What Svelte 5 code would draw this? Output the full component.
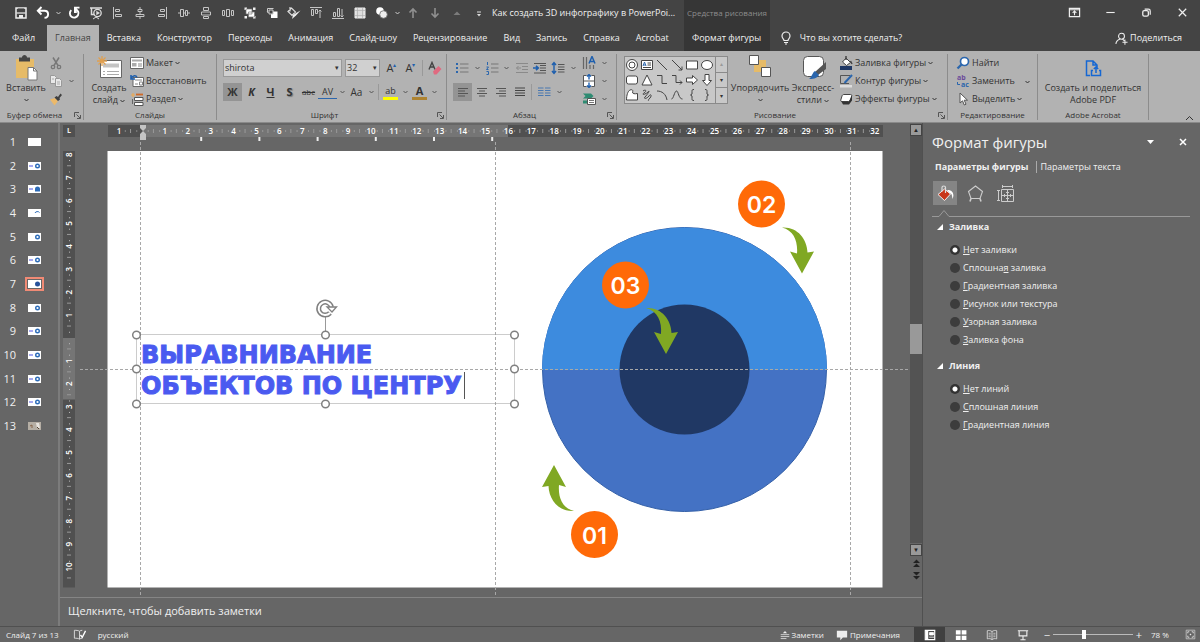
<script lang="ts">
  // every icon is drawn on a 14x14 grid unless a size is given
  const icons: Record<string, string> = {
    save: `<path d="M2 2h10v10H2z" fill="none" stroke="#eee" stroke-width="1.500"/><path d="M4 2.500h6v3.500H4z" fill="#444"/><path d="M2.500 7h9" stroke="#eee" stroke-width="1.200"/><path d="M5 9h4v3H5z" fill="#eee"/>`,
    undo: `<path d="M5.500 1 1.800 4.800l3.700 3.700M2.500 4.800H8.500c4.800 0 4.800 7 0 7" fill="none" stroke="#fff" stroke-width="1.900"/>`,
    redo: `<path d="M8.500 3.200A4.300 4.300 0 1 1 4.300 4.100" fill="none" stroke="#fff" stroke-width="1.900"/><path d="M7 .8h5.500v1.700H9.800V7H7z" fill="#fff"/>`,
    show: `<path d="M1 2h12M2.500 2.500v6h3" fill="none" stroke="#ddd" stroke-width="1.500"/><circle cx="8.500" cy="7" r="3.700" fill="none" stroke="#ddd" stroke-width="1.300"/><path d="M7.300 4.800v4.400L11 7z" fill="#ddd"/><path d="M4 13l3-2 3 2" fill="none" stroke="#ddd"/>`,
    alignLeft: `<path d="M2.500 1v12M4.500 3.500h4v2h-4zM4.500 8.500h6v2h-6z" fill="none" stroke="#c4c4c4"/>`,
    alignCenter: `<path d="M7 1v2M5 3.500h4v2H5zM7 6v2.500M3 8.500h8v2H3zM7 11v2" fill="none" stroke="#c4c4c4"/>`,
    alignRight: `<path d="M11.500 1v12M5.500 3.500h4v2h-4zM3.500 8.500h6v2h-6z" fill="none" stroke="#c4c4c4"/>`,
    middle: `<path d="M1 7h2M3.500 3.500h3v7h-3zM8.500 4.500h2v5h-2zM11 7h2M6.500 7h2" fill="none" stroke="#c4c4c4"/>`,
    distV: `<path d="M4.500 1.500h5v3h-5zM2.500 6h9v3h-9zM4.500 10.500h5v2h-5z" fill="none" stroke="#c4c4c4"/>`,
    distH: `<path d="M1.500 4.500h2v5h-2zM5.500 3.500h3v7h-3zM10.500 4.500h2v5h-2z" fill="none" stroke="#c4c4c4"/>`,
    group: `<path d="M1.500 1.500H4V4H1.500zM10 1.500h2.500V4H10zM1.500 10H4v2.500H1.500zM10 10h2.500v2.500H10z" fill="#eee"/><path d="M3 3h6v5H3zM5.500 6h6v5h-6z" fill="#fff" stroke="#777" stroke-width=".7"/>`,
    ungroup: `<path d="M2.500 2.500h6M2.500 2.500v4M2 5l1.500 2" fill="none" stroke="#ccc"/><path d="M6 5.500h6.500V12H6z" fill="#fff"/><path d="M4 4h4v4H4z" fill="#444" stroke="#ccc"/>`,
    fillTool: `<path d="M3 1v4.500M1 5.500 4.500 2l4 4-3.500 3.500z" fill="none" stroke="#ddd" stroke-width="1.200"/><path d="M13.500 4.500l-4.500 5-4 3.500 1-4 4-2.500z" fill="#eee"/>`,
    topAlign: `<path d="M1 1.500h12M2.500 3.500h2v6h-2zM6.500 3.500h2v4h-2zM11 12V4M9.500 5.500 11 4l1.500 1.500" fill="none" stroke="#c4c4c4"/>`,
    bottomAlign: `<path d="M1 12.500h12M2.500 6.500h2v4h-2zM6.500 2.500h2v8h-2zM11 3v8M9.500 9.500 11 11l1.500-1.500" fill="none" stroke="#c4c4c4"/>`,
    table: `<path d="M2 2h10v10H2z" fill="#ddd" stroke="#eee"/><path d="M4.500 2v10M2 4.500h10M2 9.500h10M9.500 2v10" stroke="#aaa" stroke-width=".6"/>`,
    shapes: `<circle cx="5" cy="5" r="3.800" fill="#fff"/><circle cx="8.500" cy="8.500" r="3.800" fill="#eee" stroke="#666" stroke-width=".8"/>`,
    up: `<path d="M7 12V3M3.500 6.500 7 3l3.500 3.500" fill="none" stroke="#909090" stroke-width="1.600"/>`,
    down: `<path d="M7 2v9M3.500 7.500 7 11l3.500-3.500" fill="none" stroke="#909090" stroke-width="1.600"/>`,
    eject: `<path d="M3.500 9 7 5.500 10.500 9z" fill="#7c7c7c"/>`,
    customize: `<path d="M5 6h4" stroke="#ddd"/><path d="M5 8h4L7 10.500z" fill="#ddd"/>`,
    ribbonOpts: `<path d="M1.500 2.500h11v9h-11z" fill="none" stroke="#eee" stroke-width="1.300"/><path d="M1.500 4h11M7 10V6M5 7.500 7 5.500l2 2" fill="none" stroke="#eee" stroke-width="1.200"/>`,
    minimize: `<path d="M2.500 7h9" stroke="#eee" stroke-width="1.200"/>`,
    restore: `<rect x="3" y="5" width="6" height="6" rx="1.500" fill="none" stroke="#eee" stroke-width="1.400"/><path d="M5 3.300h4a2 2 0 0 1 2 2v4" fill="none" stroke="#eee" stroke-width="1.300"/>`,
    close: `<path d="M3 3l8 8M11 3l-8 8" stroke="#eee" stroke-width="1.300"/>`,
    bulb: `<path d="M5 9.500C5 8 3 7.500 3 5a4 4 0 0 1 8 0c0 2.500-2 3-2 4.500zM5 11.500h4M6 13h2" fill="none" stroke="#eee" stroke-width="1.200"/>`,
    person: `<circle cx="7" cy="4.500" r="3.200" fill="none" stroke="#eee" stroke-width="1.100"/><path d="M1 13c0-3 2-4.500 4.500-5.500M8 7.500l2 2M8 11h5.500M10.700 8.200v5.500" fill="none" stroke="#eee" stroke-width="1.100"/>`,
    cut: `<path d="M4 1.500l5 8M10 1.500l-5 8" stroke="#777" stroke-width="1.500"/><circle cx="4" cy="11" r="1.700" fill="none" stroke="#777" stroke-width="1.300"/><circle cx="10" cy="11" r="1.700" fill="none" stroke="#777" stroke-width="1.300"/>`,
    copy: `<path d="M1.500 1.500h4l2 2v6h-6z" fill="#e8e8e8" stroke="#999"/><path d="M6.500 4.500h4l2 2v6h-6z" fill="#e8e8e8" stroke="#999"/><path d="M8 8h3M8 10h3M3 5h2" stroke="#aaa"/>`,
    painter: `<path d="M1 7.500 6 6l3 3-3.500 4.500z" fill="#ecb96a"/><path d="M5.500 5.500 7.500 4l1.500 1 2.500-3.500L13 3l-2.500 3 .5 1.500-2 1.500z" fill="#404040"/>`,
    layout: `<path d="M.5 1.500h13v11H.5z" fill="#fff" stroke="#666"/><path d="M2 3.500h10v2H2zM2 7h4.500v3.500H2z" fill="#aaa"/><path d="M8 8h4M8 10h4" stroke="#888"/>`,
    reset: `<path d="M3 3.500h10.500v9H3z" fill="#fff" stroke="#666"/><path d="M5 6h7M5 10h3M9.500 8h3v3h-3z" fill="none" stroke="#888"/><path d="M1 1v4h4M1 4.500C3 1 6 1 7 3.500" fill="none" stroke="#1e5fae" stroke-width="1.600"/>`,
    section: `<path d="M1 3h4M3 1v4" stroke="#ecaa55" stroke-width="1.200"/><path d="M6 2.500h7" stroke="#d06a28" stroke-width="1.800"/><path d="M4.500 5.500h8.500v3H4.500zM4.500 10.500h8.500v3H4.500z" fill="#fff" stroke="#555"/><path d="M2.500 7v5" stroke="#666"/>`,
    eraser: `<path d="M1 8.500 4 1.500l3 7M2 6h4" fill="none" stroke="#444" stroke-width="1.400"/><path d="M5 10.500 10.500 5l3 3-5 5.500H6z" fill="#e06a80"/>`,
    bullets: `<path d="M1 3h2M1 7h2M1 11h2" stroke="#2b66ad" stroke-width="2"/><path d="M5 3h8.500M5 7h8.500M5 11h8.500" stroke="#777"/>`,
    numbers: `<path d="M2.500 1v3M1.500 6h2L1.500 8.500h2M1.500 10.500h2v3h-2" fill="none" stroke="#2b66ad"/><path d="M6 3h7.500M6 7h7.500M6 11h7.500" stroke="#777"/>`,
    outdent: `<path d="M1 2.500h12M7 5.500h6M7 8.500h6M1 11.500h12" stroke="#8a8a8a"/><path d="M6 7H1.500M3.500 5l-2 2 2 2" fill="none" stroke="#8a8a8a"/>`,
    indent: `<path d="M1 2.500h12M7 4.500h6M7 7h6M7 9.500h6M1 12h12" stroke="#555"/><path d="M0 7h5M3 4.800 5.300 7 3 9.200" fill="none" stroke="#1e5fae" stroke-width="1.600"/>`,
    spacing: `<path d="M3 1.500v11M1 4l2-2.500L5 4M1 10l2 2.500L5 10" fill="none" stroke="#1e5fae" stroke-width="1.400"/><path d="M7 3.500h6.500M7 6h6.500M7 8.500h6.500M7 11h6.500" stroke="#555"/>`,
    left: `<path d="M2 3.500h10M2 6h7M2 8.500h10M2 11h7" stroke="#555"/>`,
    center: `<path d="M2 3.500h10M4 6h6M2 8.500h10M4 11h6" stroke="#555"/>`,
    right: `<path d="M2 3.500h10M5 6h7M2 8.500h10M5 11h7" stroke="#555"/>`,
    justify: `<path d="M2 3h10M2 5.500h10M2 8h10M2 10.500h10" stroke="#444"/>`,
    columns: `<path d="M1 3h5.500M1 5.500h5.500M1 8h5.500M1 10.500h5.500M8 3h5.500M8 5.500h5.500M8 8h5.500M8 10.500h5.500" stroke="#4a78b0"/>`,
    direction: `<path d="M1.500 1v12M4.500 1v12M8 9v4M11.500 9v4" stroke="#666" stroke-width="1.200"/><path d="M7 7.500l3-7 3 7M8 5.500h4" fill="none" stroke="#1e5fae" stroke-width="1.500"/>`,
    valign: `<path d="M4.500 1.500h-3v11h3M9.500 1.500h3v11h-3" fill="#fff" stroke="#555"/><path d="M2 2h10v10H2z" fill="#fff"/><path d="M1.500 7h11" stroke="#555"/><path d="M7 0v5.500M5 2.500l2-2 2 2M7 14V8.500M5 11.500l2 2 2-2" fill="none" stroke="#1e5fae" stroke-width="1.400"/>`,
    smartart: `<path d="M1 1.500h8l2.500 2.500L9 6.500H1L3.500 4zM1 8.500h5v3H1z" fill="#2e8b72"/><path d="M5.500 6.500h8v6h-8z" fill="#fff" stroke="#555"/><path d="M7 8.500h5M7 10.500h5" stroke="#777"/>`,
    fill: `<path d="M3.500 6 7 2l4.500 4.500-4 3z" fill="#fff" stroke="#444"/><path d="M7 0v4M11.500 5l1.500 3" stroke="#444" stroke-width="1.500"/><path d="M1 10h12v4H1z" fill="#203864"/>`,
    outline: `<path d="M11 1.500H1.500v8H10" fill="none" stroke="#555"/><path d="M13 1 5.500 9" stroke="#2b66ad" stroke-width="2"/><path d="M1 11h12v2.500H1z" fill="#ddd"/>`,
    effects: `<path d="M5 2.500h6.500c1 0 1.500.5 1.200 1.500l-1.200 4c-.3 1-1 1.500-2 1.500H3c-1 0-1.500-.5-1.200-1.500L3 4c.3-1 1-1.500 2-1.500z" fill="#fff" stroke="#444"/><path d="M1.800 8.500c2 2 6 1.500 8 1l3.200-6v5L10 12.500H4z" fill="#333"/>`,
    find: `<circle cx="8.500" cy="5.500" r="4" fill="#fff" stroke="#2b66ad" stroke-width="1.700"/><path d="M5.500 8.500 1.500 12.500" stroke="#2b66ad" stroke-width="2.300"/>`,
    pointer: `<path d="M4 1v10l2.500-2.200 1.800 4.200 1.700-.8-1.800-4H11.500z" fill="#fff" stroke="#555"/>`,
    bucket: `<path d="M1 9.500 7.500 4l6 5L7.500 15.500z" fill="#c8371b" stroke="#eee"/><path d="M5 6.500V2.500c0-2 3.500-2 3.500 0V8" fill="none" stroke="#ddd" stroke-width="1.200"/><path d="M10 5c5-.5 8 3.500 5.500 9-.5-4.500-1-5.500-2.500-5.500z" fill="#fff"/>`,
    pentagon: `<path d="M8.500 1 15.500 6.500 13 13.500H4L1.500 6.500z" fill="none" stroke="#ccc" stroke-width="1.100"/><path d="M4 13.500l-1 3M13 13.500l1 3" stroke="#ccc" stroke-width="1.600"/>`,
    size: `<path d="M5 1.500h11M5.500 0v3M15.500 0v3M1.500 5v11M0 5.500h3M0 15.500h3" stroke="#ccc"/><path d="M4.500 4.500h12v12h-12zM4.500 10.500h12M10.500 4.500v12" fill="none" stroke="#ccc"/><path d="M7.500 9v3M13.500 9v3M9 7.500h3M9 13.500h3" stroke="#ccc"/>`,
    spell: `<path d="M7 3.500C5.500 2.500 3.500 2.500 1.500 2.500v8.500c2 0 4 0 5.500 1 1-.8 2-1 3-1M7 3.500V12M7 3.500c1-.8 2-1 3-1" fill="none" stroke="#ddd"/><path d="M8 7.500l2 2.500 3.500-7" fill="none" stroke="#fff" stroke-width="1.500"/>`,
    notes: `<path d="M4 4.500 7 1.500l3 3z" fill="#eee"/><path d="M1 6.500h12M1 9.200h12M1 12h8" stroke="#ddd" stroke-width="1.200"/>`,
    comments: `<path d="M1 2h12v8H8l-3 3v-3H1z" fill="#eee"/>`,
    normal: `<path d="M1.500 1.500h11v11h-11z" fill="none" stroke="#fff" stroke-width="1.400"/><path d="M2 2h3v10H2z" fill="#fff"/><path d="M6.500 4h4.500v3H6.500zM6 9.500h6" fill="#fff" stroke="#fff"/>`,
    sorter: `<path d="M1 1.500h5.500v5H1zM7.800 1.500h5.500v5H7.800zM1 7.800h5.500v5H1zM7.800 7.800h5.500v5H7.800z" fill="#fff"/>`,
    reading: `<path d="M7 3C5 1.500 3 1.500 1.500 2v9.500c2-.5 4-.5 5.500 1 1.500-1.500 3.500-1.500 5.500-1V2C11 1.500 9 1.500 7 3zM7 3v9" fill="none" stroke="#ddd"/><path d="M3 5h2.500M3 7h2.500M3 9h2.500M8.500 5H11M8.500 7H11M8.500 9H11" stroke="#ccc"/>`,
    slideshow: `<path d="M1 2h12M2.500 2v6h9V2M7 8v4M4 12.500h6" fill="none" stroke="#eee" stroke-width="1.300"/>`,
    fit: `<path d="M1.500 1.500h11v11h-11z" fill="none" stroke="#ccc"/><path d="M3.500 5.500v-2h2M8.500 3.500h2v2M10.500 8.500v2h-2M5.500 10.500h-2v-2M6 7h2M7 6v2" fill="none" stroke="#eee"/>`,
  };

  const quickAccess = [
    ["redo", "Повторить"], ["show", "С начала"], ["alignLeft", "По левому краю"],
    ["alignCenter", "По центру"], ["alignRight", "По правому краю"], ["middle", "По середине"],
    ["distV", "По вертикали"], ["distH", "По горизонтали"], ["group", "Группировать"],
    ["ungroup", "Разгруппировать"], ["fillTool", "Заливка"], ["topAlign", "По верхнему краю"],
    ["bottomAlign", "По нижнему краю"], ["table", "Таблица"],
  ];

  const tabs = ["Файл", "Главная", "Вставка", "Конструктор", "Переходы", "Анимация", "Слайд-шоу",
    "Рецензирование", "Вид", "Запись", "Справка", "Acrobat"];

  const gallery = [
    `<circle cx="7" cy="7" r="5.500"/><circle cx="7" cy="7" r="3"/>`,
    `<path d="M1.500 2.500h11v9h-11z"/><path d="M3 8l1.500-4L6 8M3.500 7h2" stroke="#2b66ad"/><path d="M7.500 5H11M7.500 7H11M3 9.500h8"/>`,
    `<path d="M2 2l10 10"/>`,
    `<path d="M2 2l10 10M12 8.500V12H8.500"/>`,
    `<path d="M1.500 3h11v8h-11z"/>`,
    `<ellipse cx="7" cy="7" rx="5.500" ry="4.500"/>`,
    `<rect x="1.500" y="3" width="11" height="8" rx="2"/>`,
    `<path d="M7 2l5 10H2z"/>`,
    `<path d="M2 2.500h5v8h5"/>`,
    `<path d="M2 2.500h4v7h6M10 7.500l2 2-2 2"/>`,
    `<path d="M1.500 5h6V2.500L12.500 7l-5 4.500V9h-6z"/>`,
    `<path d="M5 1.500v6H2.500L7 12.500l4.500-5H9v-6z"/>`,
    `<path d="M5 2c3-1 3 1 2.500 2 0 2 2 2 5 1.500V12h-11C1.500 7 3 3 5 2z"/>`,
    `<path d="M3 3c3-2 4 0 1 2s1 2 4-1-1 3-3 5 2 2 4-1 3 0 1 2-2 3-1 2"/>`,
    `<path d="M2 3c5 0 9 3 10 9"/>`,
    `<path d="M1.500 11c2 0 3-8 5-8s2 8 6 8"/>`,
    `<path d="M9 1.500c-2 0-2 .5-2 2V6L5.500 7 7 8v2.500c0 1.500 0 2 2 2"/>`,
    `<path d="M5 1.500c2 0 2 .5 2 2V6l1.500 1L7 8v2.500c0 1.500 0 2-2 2"/>`,
  ];

  const slides = [
    { title: false, art: "" },
    { title: true, art: "ring" },
    { title: true, art: "dome" },
    { title: false, art: "arc" },
    { title: false, art: "ring" },
    { title: true, art: "ring" },
    { title: false, art: "disc" },
    { title: false, art: "ring" },
    { title: true, art: "ring" },
    { title: true, art: "ring" },
    { title: true, art: "ring" },
    { title: true, art: "ring" },
    { title: false, art: "photo" },
  ];
  let current = $state(7);

  // [before, accelerator, after]
  const fillOptions = [
    ["", "Н", "ет заливки"],
    ["Сплошна", "я", " заливка"],
    ["", "Г", "радиентная заливка"],
    ["", "Р", "исунок или текстура"],
    ["", "У", "зорная заливка"],
    ["", "З", "аливка фона"],
  ];
  const lineOptions = [
    ["", "Н", "ет линий"],
    ["", "С", "плошная линия"],
    ["", "Г", "радиентная линия"],
  ];
  let fillChoice = $state(0);
  let lineChoice = $state(0);
  let zoom = $state(78);

  // rulers: one unit is a centimetre of the slide
  const unit = 22.9;
  const originX = 142;
  const originY = 338;
  const hMarks = Array.from({ length: 34 }, (_, i) => i - 1);
  const vMarks = Array.from({ length: 19 }, (_, i) => i - 8);
  const tabStops = [1, 2, 3, 4, 5, 6].map((i) => originX + 1 + i * 58.2);

  const handles = [
    [136, 335], [325, 335], [514, 335],
    [136, 369], [514, 369],
    [136, 404], [325, 404], [514, 404],
  ];
  const badges = [
    { n: "02", x: 761.5, y: 204 },
    { n: "03", x: 625.5, y: 285 },
    { n: "01", x: 594.5, y: 534.5 },
  ];
  const arrow = "M0 0C15-1 25 11 25.500 25L32 24 20 46 8 24 15 26C16 14 12 3 0 0z";
</script>

{#snippet icon(name: string, px = 14, box = 14)}
  <svg width={px} height={px} viewBox="0 0 {box} {box}" aria-hidden="true">{@html icons[name]}</svg>
{/snippet}

{#snippet chevron()}
  <svg class="chevron" width="5" height="4" viewBox="0 0 5 4" aria-hidden="true">
    <path d="M.5 1l2 2 2-2" fill="none" stroke="currentColor" />
  </svg>
{/snippet}

{#snippet tool(name: string, label: string, active = false)}
  <button class="tool" class:active aria-label={label}>{@render icon(name)}</button>
{/snippet}

{#snippet drop(label: string)}
  <button class="drop" aria-label={label}>{@render chevron()}</button>
{/snippet}

{#snippet launcher()}
  <button class="launcher" aria-label="Дополнительно">
    <svg width="7" height="7" viewBox="0 0 7 7"><path d="M.5 5V.5H5M2.500 2.500l3.500 3.500M6.500 3v3.500H3" fill="none" stroke="#555" /></svg>
  </button>
{/snippet}

{#snippet options(name: string, list: string[][], value: number, pick: (i: number) => void)}
  {#each list as [before, key, after], i}
    <label class="option">
      <input type="radio" {name} checked={value === i} onchange={() => pick(i)} />
      <span>{before}<u>{key}</u>{after}</span>
    </label>
  {/each}
{/snippet}

<div class="app">
  <header>
    <div class="titlebar">
      <div class="quick">
        {@render tool("save", "Сохранить")}
        {@render tool("undo", "Отменить")}
        {@render drop("Список отмены")}
        {#each quickAccess as [name, label]}
          {@render tool(name, label)}
        {/each}
        {@render tool("shapes", "Объединить фигуры")}
        {@render drop("Фигуры")}
        {@render tool("up", "Вверх")}
        {@render tool("down", "Вниз")}
        {@render tool("eject", "Свернуть")}
        {@render tool("customize", "Настройка панели")}
      </div>
      <span class="doc">Как создать 3D инфографику в PowerPoi...</span>
      <span class="context">Средства рисования</span>
      <div class="window">
        <button aria-label="Параметры ленты">{@render icon("ribbonOpts", 13)}</button>
        <button aria-label="Свернуть окно">{@render icon("minimize", 13)}</button>
        <button aria-label="Восстановить окно">{@render icon("restore", 13)}</button>
        <button aria-label="Закрыть">{@render icon("close", 13)}</button>
      </div>
    </div>
    <nav>
      {#each tabs as tab}
        <button class="tab" class:file={tab === "Файл"} class:selected={tab === "Главная"}>{tab}</button>
      {/each}
      <button class="tab contextual">Формат фигуры</button>
      <button class="tell">{@render icon("bulb")}Что вы хотите сделать?</button>
      <button class="share">{@render icon("person", 13)}Поделиться</button>
    </nav>
  </header>

  <section class="ribbon">
    <div class="group clipboard">
      <div class="body">
        <button class="big">
          <svg width="24" height="28" viewBox="0 0 24 28">
            <path d="M2 5h18v19H2z" fill="#e6bb68" />
            <path d="M5 3.500h3c0-3.500 5-3.500 5 0h3v4H5z" fill="#444" />
            <path d="M14 13.500h5.500l3.500 3.500v9h-9z" fill="#fff" stroke="#777" />
            <path d="M19.500 13.500V17H23" fill="none" stroke="#777" />
          </svg>
          <span>Вставить</span>
          {@render chevron()}
        </button>
        <div class="stack">
          <span class="row">{@render tool("cut", "Вырезать")}</span>
          <span class="row">{@render tool("copy", "Копировать")}{@render drop("Варианты копирования")}</span>
          <span class="row">{@render tool("painter", "Формат по образцу")}</span>
        </div>
      </div>
      <div class="caption more">Буфер обмена{@render launcher()}</div>
    </div>

    <div class="group slides-group">
      <div class="body">
        <button class="big">
          <svg width="28" height="28" viewBox="0 0 28 28">
            <path d="M5.500 6.500h21v17h-21z" fill="#fff" stroke="#666" />
            <path d="M8 9.500h16v4H8z" fill="#c4c4c4" />
            <path d="M8 17.500h2M12 17.500h12M8 20.500h2M12 20.500h12" stroke="#aaa" />
            <path d="M7 2v10M2 7h10M3.500 3.500l7 7M10.500 3.500l-7 7" stroke="#e0a050" stroke-width="1.300" />
          </svg>
          <span>Создать</span>
          <span>слайд {@render chevron()}</span>
        </button>
        <div class="stack">
          <button class="item">{@render icon("layout")}Макет {@render chevron()}</button>
          <button class="item">{@render icon("reset")}Восстановить</button>
          <button class="item">{@render icon("section")}Раздел {@render chevron()}</button>
        </div>
      </div>
      <div class="caption">Слайды</div>
    </div>

    <div class="group font-group">
      <div class="body rows">
        <div class="line">
          <div class="combo">
            <input aria-label="Шрифт" value="shirota" /><span>▾</span>
          </div>
          <div class="combo short">
            <input aria-label="Размер шрифта" value="32" /><span>▾</span>
          </div>
          <button class="tool letter">A<sup>▴</sup></button>
          <button class="tool letter">A<sup>▾</sup></button>
          <i class="divider"></i>
          {@render tool("eraser", "Очистить форматирование")}
        </div>
        <div class="line">
          <button class="tool letter active"><b>Ж</b></button>
          <button class="tool letter"><b><em>К</em></b></button>
          <button class="tool letter"><b><u>Ч</u></b></button>
          <button class="tool letter shadow"><b>S</b></button>
          <button class="tool letter small"><s>abc</s></button>
          <button class="tool letter kern">AV</button>
          {@render drop("Интервал")}
          <button class="tool letter case">Aa</button>
          {@render drop("Регистр")}
          <i class="divider"></i>
          <button class="tool letter mark yellow">ab</button>
          {@render drop("Цвет выделения")}
          <button class="tool letter mark brown"><b>A</b></button>
          {@render drop("Цвет текста")}
        </div>
      </div>
      <div class="caption more">Шрифт{@render launcher()}</div>
    </div>

    <div class="group para-group">
      <div class="body">
        <div class="rows">
          <div class="line">
            {@render tool("bullets", "Маркеры")}{@render drop("Виды маркеров")}
            {@render tool("numbers", "Нумерация")}{@render drop("Виды нумерации")}
            {@render tool("outdent", "Уменьшить отступ")}
            {@render tool("indent", "Увеличить отступ")}
            {@render tool("spacing", "Интервал строк")}{@render drop("Интервалы")}
          </div>
          <div class="line">
            {@render tool("left", "По левому краю", true)}
            {@render tool("center", "По центру")}
            {@render tool("right", "По правому краю")}
            {@render tool("justify", "По ширине")}
            <i class="divider"></i>
            {@render tool("columns", "Колонки")}{@render drop("Число колонок")}
          </div>
        </div>
        <div class="stack">
          <span class="row">{@render tool("direction", "Направление текста")}{@render drop("Направления")}</span>
          <span class="row">{@render tool("valign", "Выровнять текст")}{@render drop("Выравнивание")}</span>
          <span class="row">{@render tool("smartart", "SmartArt")}{@render drop("Варианты SmartArt")}</span>
        </div>
      </div>
      <div class="caption more">Абзац{@render launcher()}</div>
    </div>

    <div class="group draw-group">
      <div class="body">
        <div class="gallery">
          <div class="cells">
            {#each gallery as shape, i}
              <button aria-label="Фигура {i + 1}">
                <svg width="14" height="14" viewBox="0 0 14 14" stroke="#444">
                  <g fill={[2, 3, 8, 9, 13, 14, 15, 16, 17].includes(i) ? "none" : "#fff"}>{@html shape}</g>
                </svg>
              </button>
            {/each}
          </div>
          <div class="scroller">
            <button aria-label="Предыдущие" disabled>▴</button>
            <button aria-label="Следующие">▾</button>
            <button aria-label="Все фигуры">▾</button>
          </div>
        </div>
        <button class="big">
          <svg width="24" height="28" viewBox="0 0 24 28">
            <path d="M6 6h12v12H6z" fill="#e6bb68" />
            <path d="M1.500 1.500h9v9h-9zM13.500 13.500h9v9h-9z" fill="#fff" stroke="#555" />
          </svg>
          <span>Упорядочить</span>
          {@render chevron()}
        </button>
        <button class="big">
          <svg width="28" height="28" viewBox="0 0 28 28">
            <rect x="4.500" y="2.500" width="20" height="20" rx="4" fill="#fff" stroke="#555" />
            <path d="M27 8v7l-8 6-3-3z" fill="#555" />
            <path d="M16 17l4 4c-2 4-7 4-10 4 3-2 3-6 6-8z" fill="#2b66ad" />
          </svg>
          <span>Экспресс-</span>
          <span>стили {@render chevron()}</span>
        </button>
        <div class="stack">
          <button class="item">{@render icon("fill")}Заливка фигуры {@render chevron()}</button>
          <button class="item">{@render icon("outline")}Контур фигуры {@render chevron()}</button>
          <button class="item">{@render icon("effects")}Эффекты фигуры {@render chevron()}</button>
        </div>
      </div>
      <div class="caption more">Рисование{@render launcher()}</div>
    </div>

    <div class="group edit-group">
      <div class="body">
        <div class="stack">
          <button class="item">{@render icon("find")}Найти</button>
          <button class="item">
            <svg width="14" height="14" viewBox="0 0 14 14">
              <text x="1" y="6" font-size="7" font-weight="700" fill="#6b4a9b">ab</text>
              <text x="5" y="13" font-size="7" font-weight="700" fill="#2b66ad">ac</text>
              <path d="M1.500 8v2.500H4" fill="none" stroke="#2b66ad" />
            </svg>Заменить <span class="far">{@render chevron()}</span>
          </button>
          <button class="item">{@render icon("pointer")}Выделить {@render chevron()}</button>
        </div>
      </div>
      <div class="caption">Редактирование</div>
    </div>

    <div class="group pdf-group">
      <div class="body">
        <button class="big">
          <svg width="24" height="28" viewBox="0 0 24 28" fill="none" stroke="#1567d3" stroke-width="1.500">
            <path d="M9 21.500H5.500V7H12l4 4v3M12 7v4h4M12 16.500h-1.500v5h9v-5H18M15 19v-6M12.800 15l2.200-2 2.200 2" />
          </svg>
          <span>Создать и поделиться</span>
          <span>Adobe PDF</span>
        </button>
      </div>
      <div class="caption">Adobe Acrobat</div>
    </div>
    <button class="collapse" aria-label="Свернуть ленту">
      <svg width="9" height="6" viewBox="0 0 9 6"><path d="M1 5l3.500-3.500L8 5" fill="none" stroke="#333" /></svg>
    </button>
  </section>

  <main>
    <aside class="thumbs">
      <ol>
        {#each slides as slide, i}
          <li>
            <button class:current={current === i + 1} onclick={() => (current = i + 1)}>
              <span>{i + 1}</span>
              <svg width="13" height="8" viewBox="0 0 13 8">
                <path d="M0 0h13v8H0z" fill={slide.art === "photo" ? "#b5aea4" : "#fff"} />
                {#if slide.title}<path d="M1 4h4" stroke="#6a70e8" stroke-width="1.200" />{/if}
                {#if slide.art === "ring"}<circle cx="9.500" cy="4" r="1.800" fill="none" stroke="#2d6cb8" stroke-width="1.400" />{/if}
                {#if slide.art === "dome"}<path d="M7 6.500V4a2.500 2.500 0 0 1 5 0v2.500z" fill="#2d6cb8" />{/if}
                {#if slide.art === "arc"}<path d="M7 4a2.500 2 0 0 1 4.500-.5" fill="none" stroke="#2d6cb8" />{/if}
                {#if slide.art === "disc"}<circle cx="9.500" cy="4" r="2.500" fill="#27529b" />{/if}
                {#if slide.art === "photo"}<path d="M2 4l2-1v3" fill="none" stroke="#86654a" /><path d="M8 1h3l1 5H9z" fill="#e8e4de" /><path d="M9 5l2 2" stroke="#554433" />{/if}
              </svg>
            </button>
          </li>
        {/each}
      </ol>
    </aside>

    <div class="center">
      <div class="editor">
        <div class="corner"><span>L</span></div>
        <svg class="hruler" viewBox="75 123 835 14">
          <path d="M108 125h775v12H108z" fill="#505050" />
          <path d="M143 125h365v12H143z" fill="#757575" />
          {#each hMarks as n}
            {#if n !== 0}
              <text x={originX + n * unit} y="134">{Math.abs(n)}</text>
            {/if}
            {#if n < 32}
              <path d="M{originX + (n + 0.5) * unit} 129v4" stroke="#999" />
              <path d="M{originX + (n + 0.25) * unit} 131h1M{originX + (n + 0.75) * unit} 131h1" stroke="#bbb" />
            {/if}
          {/each}
          <path d="M140 125h6v3l-3 3-3-3zM143 131l3 3v3h-6v-3z" fill="#c4c4c4" />
        </svg>
        <svg class="vruler" viewBox="60 137 15 460">
          <path d="M63 151h12v436.500H63z" fill="#505050" />
          <path d="M63 338h12v61.500H63z" fill="#757575" />
          {#each vMarks as n}
            {#if n !== 0}
              <text transform="translate(72 {originY + n * unit}) rotate(-90)">{Math.abs(n)}</text>
            {/if}
            <path d="M67 {originY + (n + 0.5) * unit - 0.5}h4" stroke="#999" />
            {#if n < 10}
              <path d="M69 {originY + (n + 0.25) * unit}h1M69 {originY + (n + 0.75) * unit}h1" stroke="#bbb" />
            {/if}
          {/each}
        </svg>
        <svg class="stage" viewBox="75 137 835 460">
          {#each tabStops as x}
            <path d="M{x} 137v4" stroke="#eee" stroke-width="2" />
          {/each}
          <path d="M140 137h6v3h-6z" fill="#c4c4c4" />
          <path d="M107.500 151h775v436.500h-775z" fill="#fff" />
          <circle cx="684.500" cy="369.500" r="142" fill="#4472c4" stroke="#3460a8" />
          <path d="M542 370a142.500 142.500 0 0 1 285 0z" fill="#3d8bde" />
          <circle cx="684.500" cy="369.500" r="65" fill="#203864" />
          {#each badges as badge}
            <circle cx={badge.x} cy={badge.y} r="23.500" fill="#ff6a08" />
            <text class="badge" x={badge.x} y={badge.y + 9}>{badge.n}</text>
          {/each}
          <g fill="#80a823">
            <path d={arrow} transform="translate(782 227.500)" />
            <path d={arrow} transform="translate(646 308)" />
            <path d={arrow} transform="translate(574 511) rotate(180)" />
          </g>
          <g stroke="#a8a8a8" stroke-dasharray="3 2" fill="none">
            <path d="M140.500 142v455M495.500 142v455M850.500 142v455M80 369.500h830" />
          </g>
          <foreignObject x="136" y="335" width="378" height="69">
            <h2>ВЫРАВНИВАНИЕ<br />ОБЪЕКТОВ ПО ЦЕНТРУ</h2>
          </foreignObject>
          <path d="M464.500 372v27" stroke="#555" />
          <path d="M136.500 334.500h378v69h-378z" fill="none" stroke="#999" stroke-dasharray="1 1" />
          <path d="M325.500 316v16" stroke="#999" />
          {#each handles as [x, y]}
            <circle cx={x + 0.5} cy={y} r="3.800" fill="#fff" stroke="#808080" stroke-width="1.500" />
          {/each}
          <g fill="none">
            <path d="M330 313a6.500 6.500 0 1 1 1.500-6" stroke="#808080" stroke-width="5" />
            <path d="M330 313a6.500 6.500 0 1 1 1.500-6" stroke="#fff" stroke-width="2" />
            <path d="M327 307h9.500L332 312z" fill="#fff" stroke="#808080" stroke-width="1.300" />
          </g>
        </svg>
        <div class="scrollbar">
          <button class="box" aria-label="Прокрутить вверх">▲</button>
          <div class="track"><div class="grip"></div></div>
          <button class="box" aria-label="Прокрутить вниз">▼</button>
          <button class="jump" aria-label="Предыдущий слайд">
            <svg width="7" height="8" viewBox="0 0 7 8"><path d="M0 4l3.500-3.500L7 4zM0 8l3.500-3.500L7 8z" fill="#222" /></svg>
          </button>
          <button class="jump" aria-label="Следующий слайд">
            <svg width="7" height="8" viewBox="0 0 7 8"><path d="M0 0h7L3.500 3.500zM0 4h7L3.500 7.500z" fill="#222" /></svg>
          </button>
        </div>
      </div>
      <div class="notes">Щелкните, чтобы добавить заметки</div>
    </div>

    <aside class="format">
      <div class="head">
        <h1>Формат фигуры</h1>
        <button class="menu" aria-label="Параметры панели">
          <svg width="7" height="4" viewBox="0 0 7 4"><path d="M0 0h7L3.500 4z" fill="#fff" /></svg>
        </button>
        <button aria-label="Закрыть панель">
          <svg width="8" height="8" viewBox="0 0 8 8"><path d="M1 1l6 6M7 1L1 7" stroke="#fff" stroke-width="1.500" /></svg>
        </button>
      </div>
      <div class="modes">
        <button class="on">Параметры фигуры</button>
        <button>Параметры текста</button>
      </div>
      <div class="kinds">
        <button class="on" aria-label="Заливка и границы">{@render icon("bucket", 17, 17)}</button>
        <button aria-label="Эффекты">{@render icon("pentagon", 17, 17)}</button>
        <button aria-label="Размер и свойства">{@render icon("size", 17, 17)}</button>
      </div>
      <div class="notch">
        <svg width="24" height="8" viewBox="0 0 24 8"><path d="M0 7.500h7l5-6 5 6h7" fill="none" stroke="#999" /></svg>
        <i></i>
      </div>
      <h3>Заливка</h3>
      {@render options("fill", fillOptions, fillChoice, (i) => (fillChoice = i))}
      <h3 class="next">Линия</h3>
      {@render options("line", lineOptions, lineChoice, (i) => (lineChoice = i))}
    </aside>
  </main>

  <footer>
    <span>Слайд {current} из {slides.length}</span>
    <button class="spell" aria-label="Правописание">{@render icon("spell", 13)}</button>
    <button>русский</button>
    <button class="push">{@render icon("notes", 10)}Заметки</button>
    <button class="wide">{@render icon("comments", 12)}Примечания</button>
    <button class="view on" aria-label="Обычный">{@render icon("normal", 12)}</button>
    <button class="view" aria-label="Сортировщик слайдов">{@render icon("sorter", 12)}</button>
    <button class="view" aria-label="Режим чтения">{@render icon("reading", 12)}</button>
    <button class="view" aria-label="Показ слайдов">{@render icon("slideshow", 12)}</button>
    <div class="zoom">
      <button class="sign" onclick={() => (zoom -= 1)}>−</button>
      <input type="range" min="10" max="190" bind:value={zoom} aria-label="Масштаб" />
      <button class="sign" onclick={() => (zoom += 1)}>+</button>
    </div>
    <span class="percent">{zoom} %</span>
    <button class="fit" aria-label="По размеру окна">{@render icon("fit", 11)}</button>
  </footer>
</div>

<style>
  :global(body) {
    background: #666;
  }
  .app {
    display: flex;
    flex-direction: column;
    min-height: 100vh;
    background: #666;
    color: #f0f0f0;
    font-family: "Open Sans", "Noto Sans", sans-serif;
    font-size: 9px;
    line-height: 12px;
  }
  button,
  input {
    margin: 0;
    padding: 0;
    border: none;
    background: none;
    color: inherit;
    font: inherit;
  }
  svg {
    flex: none;
    display: block;
  }

  /* title bar and tabs */
  header {
    background: #444;
  }
  .titlebar {
    display: flex;
    height: 25px;
  }
  .quick {
    display: flex;
    align-items: center;
    padding-left: 10px;
  }
  .quick .tool {
    width: 22px;
  }
  .quick .drop {
    width: 9px;
    color: #ccc;
  }
  .doc {
    padding-left: 2px;
    width: 192px;
    line-height: 25px;
    white-space: nowrap;
  }
  .context {
    width: 86px;
    background: #363636;
    color: #8c8c8c;
    font-size: 8px;
    line-height: 25px;
    text-align: center;
    white-space: nowrap;
  }
  .window {
    display: flex;
    margin-left: auto;
  }
  .window button {
    display: grid;
    place-items: center;
    width: 36px;
  }
  nav {
    display: flex;
    height: 26px;
  }
  .tab {
    padding: 0 8px;
    font-weight: 500;
    white-space: nowrap;
  }
  .tab.file {
    padding: 0 12px;
  }
  .tab.selected {
    background: #b2b2b2;
    color: #444;
  }
  .tab.contextual {
    width: 86px;
    margin-left: 7px;
    background: #363636;
  }
  .tell,
  .share {
    display: flex;
    align-items: center;
    gap: 7px;
    padding-left: 9px;
    font-weight: 500;
    white-space: nowrap;
  }
  .share {
    gap: 2px;
    margin-left: auto;
    padding-right: 18px;
  }

  /* ribbon */
  .ribbon {
    display: flex;
    height: 71px;
    border-bottom: 1px solid #8a8a8a;
    background: #b2b2b2;
    color: #333;
  }
  .group {
    display: flex;
    flex-direction: column;
    margin: 3px 0 2px;
    border-right: 1px solid #8c8c8c;
    box-sizing: border-box;
  }
  .body {
    display: flex;
    flex: 1;
  }
  .caption {
    position: relative;
    height: 10px;
    line-height: 10px;
    font-size: 8px;
    text-align: center;
  }
  .caption.more {
    padding-right: 14px;
  }
  .launcher {
    position: absolute;
    right: 2px;
    top: 2px;
  }
  .clipboard {
    width: 84px;
  }
  .slides-group {
    width: 133px;
  }
  .font-group {
    width: 230px;
  }
  .para-group {
    width: 170px;
  }
  .draw-group {
    width: 331px;
  }
  .edit-group {
    width: 90px;
  }
  .pdf-group {
    width: 111px;
  }
  .big {
    display: flex;
    flex-direction: column;
    align-items: center;
    white-space: nowrap;
  }
  .big > .chevron {
    margin-top: 4px;
  }
  .chevron {
    display: inline-block;
    vertical-align: middle;
  }
  .stack {
    display: flex;
    flex-direction: column;
  }
  .stack > * {
    display: flex;
    align-items: center;
    height: 18px;
  }
  .item {
    gap: 2px;
    white-space: nowrap;
  }
  .far {
    margin-left: 8px;
  }
  .tool {
    display: grid;
    place-items: center;
    width: 19px;
    height: 18px;
  }
  .tool.active {
    background: #949494;
  }
  .drop {
    display: grid;
    place-items: center;
    width: 12px;
    height: 18px;
    color: #555;
  }
  .rows {
    display: flex;
    flex-direction: column;
  }
  .line {
    display: flex;
    align-items: center;
    height: 18px;
    margin-top: 5px;
  }
  .line + .line {
    margin-top: 6px;
  }
  .divider {
    width: 1px;
    height: 16px;
    margin: 0 2px;
    background: #999;
  }
  .letter {
    display: block;
    font-size: 11px;
    line-height: 18px;
  }
  .letter sup {
    font-size: 6px;
    line-height: 0;
    color: #1e5fae;
  }
  .letter.shadow {
    text-shadow: 1px 1px 1px #777;
  }
  .letter.small {
    font-size: 8px;
  }
  .letter.kern {
    height: 14px;
    border-bottom: 1px solid #2b66ad;
    font-size: 9px;
    line-height: 12px;
  }
  .letter.case {
    font-size: 10px;
  }
  .letter.mark {
    width: 15px;
    height: 16px;
    margin: 0 2px;
    border-bottom: 3px solid #ff0;
    line-height: 12px;
  }
  .letter.yellow {
    font-size: 9px;
  }
  .letter.brown {
    border-color: #ae8330;
  }
  .font-group .body {
    padding-left: 6px;
  }
  .font-group .drop {
    width: 10px;
  }
  .combo {
    display: flex;
    align-items: center;
    width: 119px;
    height: 18px;
    margin-right: 3px;
    border: 1px solid #999;
    background: #d0d0d0;
    box-sizing: border-box;
  }
  .combo.short {
    width: 35px;
    margin-right: 2px;
  }
  .combo input {
    flex: 1;
    min-width: 0;
    padding-left: 1px;
  }
  .combo span {
    padding-right: 2px;
    font-size: 7px;
  }
  .clipboard .big {
    width: 46px;
    padding-left: 6px;
  }
  .slides-group .big {
    width: 36px;
    margin: 0 3px 0 7px;
  }
  .para-group .body {
    padding-left: 6px;
  }
  .para-group .rows {
    width: 126px;
  }
  .gallery {
    display: flex;
    height: 48px;
    margin: 2px 3px 0 7px;
    border: 1px solid #8a8a8a;
    background: #c8c8c8;
    box-sizing: border-box;
  }
  .cells {
    display: grid;
    grid-template-columns: repeat(6, 15px);
    grid-auto-rows: 15px;
  }
  .scroller {
    display: grid;
    width: 11px;
    border-left: 1px solid #8a8a8a;
  }
  .scroller button {
    font-size: 6px;
    line-height: 14px;
  }
  .scroller button + button {
    border-top: 1px solid #8a8a8a;
  }
  .scroller button:disabled {
    color: #999;
  }
  .draw-group .big {
    width: 58px;
  }
  .draw-group .big + .big {
    width: 48px;
    margin-right: 2px;
  }
  .edit-group .stack {
    padding-left: 8px;
  }
  .pdf-group .big {
    width: 100%;
  }
  .collapse {
    align-self: flex-end;
    margin: 0 6px 1px auto;
  }

  /* workspace */
  main {
    display: flex;
    flex: 1;
  }
  .thumbs {
    width: 58px;
    border-right: 2px solid #7c7c7c;
  }
  ol {
    display: grid;
    grid-auto-rows: 1fr;
    height: 308px;
    margin: 7px 0 0;
    padding: 0;
    list-style: none;
  }
  li {
    display: flex;
  }
  li button {
    display: flex;
    align-items: center;
    gap: 10px;
    font-size: 11px;
  }
  li span {
    width: 16px;
    text-align: right;
  }
  li svg {
    border: 2px solid transparent;
  }
  .current svg {
    outline: 2px solid #f08a75;
    outline-offset: -1px;
  }
  .center {
    display: flex;
    flex: 1;
    flex-direction: column;
    min-width: 0;
    border-right: 1px solid #505050;
  }
  .editor {
    display: grid;
    grid-template-columns: 15px 1fr 12px;
    grid-template-rows: 14px auto;
  }
  .corner {
    display: grid;
    padding: 2px 0 0 3px;
  }
  .corner span {
    background: #505050;
    font-size: 7px;
    font-weight: 700;
    line-height: 12px;
    text-align: center;
  }
  .hruler,
  .stage {
    width: 100%;
  }
  .vruler {
    grid-row: 2;
    grid-column: 1;
    width: 15px;
    height: 100%;
  }
  .hruler text,
  .vruler text {
    fill: #fff;
    font-size: 8px;
    font-weight: 600;
    text-anchor: middle;
  }
  .badge {
    fill: #fff;
    font-family: Inter, sans-serif;
    font-size: 23px;
    font-weight: 600;
    text-anchor: middle;
  }
  h2 {
    margin: 0;
    padding: 5px 5px;
    color: #4a5af0;
    font-family: "DejaVu Sans", sans-serif;
    font-size: 24px;
    font-weight: 700;
    line-height: 31px;
    white-space: nowrap;
    -webkit-text-stroke: 1px #4a5af0;
  }
  .scrollbar {
    grid-column: 3;
    grid-row: 1 / 3;
    display: flex;
    flex-direction: column;
    padding-bottom: 15px;
  }
  .box {
    height: 12px;
    margin-top: 1px;
    border: 1px solid #444;
    background: #999;
    color: #222;
    font-size: 6px;
    line-height: 10px;
  }
  .track {
    flex: 1;
    background: #535353;
  }
  .grip {
    height: 30px;
    margin-top: 188px;
    background: #999;
  }
  .jump {
    display: grid;
    place-items: center;
    height: 13px;
  }
  .notes {
    flex: 1;
    border-top: 1px solid #858585;
    padding: 7px 8px;
    font-size: 11px;
  }

  /* format pane */
  .format {
    width: 258px;
    padding: 0 10px 0 9px;
  }
  .head {
    display: flex;
    align-items: center;
    gap: 25px;
    height: 38px;
    padding-right: 3px;
  }
  h1 {
    flex: 1;
    margin: 0;
    font-size: 15px;
    font-weight: 400;
  }
  .modes {
    display: flex;
    padding-left: 3px;
  }
  .modes button {
    padding: 0 9px 0 3px;
  }
  .modes .on {
    padding: 0 8px 0 0;
    border-right: 1px solid #aaa;
    font-weight: 700;
  }
  .kinds {
    display: flex;
    gap: 6px;
    margin: 8px 0 4px 1px;
  }
  .kinds button {
    display: grid;
    place-items: center;
    width: 24px;
    height: 24px;
  }
  .kinds .on {
    background: #858585;
  }
  .notch {
    display: flex;
    align-items: flex-end;
  }
  .notch i {
    flex: 1;
    height: 1px;
    background: #999;
  }
  h3 {
    margin: 4px 0 8px 5px;
    font-size: 9px;
    font-weight: 700;
  }
  h3::before {
    content: "";
    display: inline-block;
    margin-right: 6px;
    border-bottom: 6px solid #fff;
    border-left: 6px solid transparent;
  }
  h3.next {
    margin-top: 11px;
  }
  .option {
    display: flex;
    align-items: center;
    gap: 3px;
    height: 18px;
    padding-left: 18px;
  }
  .option input {
    appearance: none;
    width: 10px;
    height: 10px;
    border-radius: 50%;
    background: #3c3c3c;
  }
  .option input:checked {
    background: radial-gradient(circle, #fff 2px, #333 3px);
  }

  /* status bar */
  footer {
    display: flex;
    align-items: center;
    height: 15px;
    padding-left: 6px;
    border-top: 1px solid #505050;
    font-size: 8px;
    white-space: nowrap;
  }
  footer button {
    display: flex;
    align-items: center;
    gap: 2px;
  }
  .spell {
    margin: 0 12px 0 14px;
  }
  .push {
    margin-left: auto;
  }
  .wide {
    margin: 0 14px 0 12px;
  }
  .view {
    justify-content: center;
    width: 31px;
    height: 15px;
  }
  .view.on {
    background: #404040;
  }
  .zoom {
    display: flex;
    align-items: center;
    margin-left: 3px;
  }
  .sign {
    width: 12px;
    justify-content: center;
    font-size: 11px;
  }
  .zoom input {
    appearance: none;
    width: 80px;
    height: 1px;
    background: #bbb;
  }
  .zoom input::-webkit-slider-thumb {
    appearance: none;
    width: 4px;
    height: 9px;
    background: #fff;
  }
  .percent {
    width: 20px;
    margin: 0 14px 0 6px;
  }
  .fit {
    margin-right: 4px;
  }
</style>
